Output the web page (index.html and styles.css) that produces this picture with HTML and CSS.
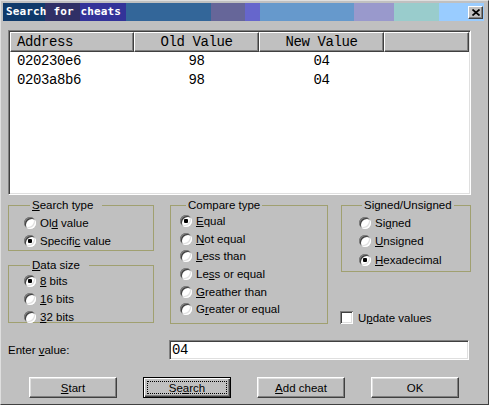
FILE: index.html
```html
<!DOCTYPE html>
<html>
<head>
<meta charset="utf-8">
<link rel="stylesheet" href="styles.css">
</head>
<body>
<div class="window">
  <div class="titlebar">
    <span class="title">Search for cheats</span>
    <span class="close"><svg width="8" height="7" viewBox="0 0 8 7"><path d="M0.5 0.5L7.5 6.5M7.5 0.5L0.5 6.5" stroke="#000" stroke-width="1.7" fill="none"/></svg></span>
  </div>
  <div class="content">
    <div class="list">
      <div class="list-head">
        <div class="hcell c-addr">Address</div>
        <div class="hcell c-val">Old Value</div>
        <div class="hcell c-val">New Value</div>
        <div class="hcell c-rest"></div>
      </div>
      <div class="row"><span class="c-addr">020230e6</span><span class="c-val">98</span><span class="c-val">04</span></div>
      <div class="row"><span class="c-addr">0203a8b6</span><span class="c-val">98</span><span class="c-val">04</span></div>
    </div>

    <div class="options">
      <div class="col col1">
        <fieldset class="group g-search">
          <legend class="wide"><u>S</u>earch type</legend>
          <div class="opt"><span class="radio"></span><span class="lbl">Ol<u>d</u> value</span></div>
          <div class="opt"><span class="radio on"></span><span class="lbl">Specifi<u>c</u> value</span></div>
        </fieldset>
        <fieldset class="group g-size">
          <legend class="wide"><u>D</u>ata size</legend>
          <div class="opt"><span class="radio on"></span><span class="lbl"><u>8</u> bits</span></div>
          <div class="opt"><span class="radio"></span><span class="lbl"><u>1</u>6 bits</span></div>
          <div class="opt"><span class="radio"></span><span class="lbl"><u>3</u>2 bits</span></div>
        </fieldset>
      </div>
      <div class="col col2">
        <fieldset class="group g-compare">
          <legend>Compare type</legend>
          <div class="opt"><span class="radio on"></span><span class="lbl"><u>E</u>qual</span></div>
          <div class="opt"><span class="radio"></span><span class="lbl"><u>N</u>ot equal</span></div>
          <div class="opt"><span class="radio"></span><span class="lbl"><u>L</u>ess than</span></div>
          <div class="opt"><span class="radio"></span><span class="lbl">Le<u>s</u>s or equal</span></div>
          <div class="opt"><span class="radio"></span><span class="lbl"><u>G</u>reather than</span></div>
          <div class="opt"><span class="radio"></span><span class="lbl">G<u>r</u>eater or equal</span></div>
        </fieldset>
      </div>
      <div class="col col3">
        <fieldset class="group g-signed">
          <legend class="tight">Signed/Unsigned</legend>
          <div class="opt"><span class="radio"></span><span class="lbl">Si<u>g</u>ned</span></div>
          <div class="opt"><span class="radio"></span><span class="lbl"><u>U</u>nsigned</span></div>
          <div class="opt"><span class="radio on"></span><span class="lbl"><u>H</u>exadecimal</span></div>
        </fieldset>
        <div class="check-row"><span class="checkbox"></span><span class="lbl">U<u>p</u>date values</span></div>
      </div>
    </div>

    <div class="value-row">
      <span class="value-label">Enter <u>v</u>alue:</span>
      <div class="edit">04</div>
    </div>

    <div class="buttons">
      <div class="btn"><span class="lbl"><u>S</u>tart</span></div>
      <div class="btn default"><span class="focus"><span class="lbl">Se<u>a</u>rch</span></span></div>
      <div class="btn"><span class="lbl"><u>A</u>dd cheat</span></div>
      <div class="btn"><span class="lbl">OK</span></div>
    </div>
  </div>
</div>
</body>
</html>
```

FILE: styles.css
```css
* { box-sizing: border-box; }

body {
  margin: 0;
  width: 489px;
  height: 405px;
  overflow: hidden;
  background: #c0c0c0;
  font-family: "Liberation Sans", Arial, sans-serif;
  font-size: 11.5px;
  color: #000;
}

u { text-decoration: underline; text-underline-offset: 1px; }

.window {
  width: 489px;
  height: 405px;
  border-top: 1px solid #dfdfdf;
  border-left: 1px solid #dfdfdf;
  border-right: 1px solid #404040;
  border-bottom: 1px solid #404040;
  padding: 2px 4px 0 2px;
  background: #c0c0c0;
}

.titlebar {
  height: 18px;
  display: flex;
  align-items: center;
  justify-content: space-between;
  padding: 0 1px 0 3px;
  background: linear-gradient(to right,
    #0f3a6b 0 42px,
    #303066 42px 77px,
    #333399 77px 123px,
    #336699 123px 208px,
    #666699 208px 242px,
    #6666cc 242px 257px,
    #6699cc 257px 351px,
    #9999cc 351px 391px,
    #99cccc 391px 436px,
    #99ccff 436px);
}

.title {
  font-family: "DejaVu Sans Mono", "Liberation Mono", monospace;
  font-weight: bold;
  font-size: 11px;
  letter-spacing: 0.15px;
  color: #fff;
  line-height: 18px;
}

.close {
  width: 15px;
  height: 13px;
  background: #c0c0c0;
  border-top: 1px solid #fff;
  border-left: 1px solid #fff;
  border-right: 1px solid #404040;
  border-bottom: 1px solid #404040;
  box-shadow: inset -1px -1px 0 #808080;
  display: flex;
  align-items: center;
  justify-content: center;
}

.content {
  padding: 9px 0 0 5px;
}

/* list view */
.list {
  width: 463px;
  height: 165px;
  background: #fff;
  border-top: 1px solid #808080;
  border-left: 1px solid #808080;
  border-right: 1px solid #fff;
  border-bottom: 1px solid #fff;
  box-shadow: inset 1px 1px 0 #404040, inset -1px -1px 0 #dfdfdf;
  padding: 1px;
  font-family: "Liberation Mono", "DejaVu Sans Mono", monospace;
  font-size: 14px;
  letter-spacing: -0.4px;
}

.list-head {
  display: flex;
  height: 20px;
}

.hcell {
  height: 20px;
  line-height: 18px;
  background: #c0c0c0;
  border-top: 1px solid #fff;
  border-left: 1px solid #fff;
  border-right: 1px solid #404040;
  border-bottom: 1px solid #404040;
  box-shadow: inset -1px -1px 0 #808080;
}

.c-addr { width: 124px; padding-left: 6px; }
.c-val { width: 125px; text-align: center; }
.c-rest { width: 85px; }

.row {
  display: flex;
  height: 19px;
  line-height: 19px;
}

.row .c-addr { padding-left: 7px; }

/* option groups */
.options {
  display: flex;
  margin-top: 4px;
  height: 131px;
}

.col { display: flex; flex-direction: column; }
.col1 { width: 146px; margin-right: 16px; }
.col2 { width: 158px; margin-right: 13px; }
.col3 { width: 130px; }

.group {
  margin: 0;
  min-width: 0;
  border: 1px solid #a0a070;
  padding: 2px 0 2px 15px;
}

.group legend {
  padding: 0 2px;
  margin-left: 6px;
  line-height: 13px;
}

.group legend.wide { padding-right: 9px; }
.group legend.tight { margin-left: 3px; }

.opt {
  display: flex;
  align-items: center;
  height: 18px;
}

.g-search { height: 52px; }
.g-size { height: 64px; margin-top: 8px; padding-top: 0; }
.g-compare { height: 125px; padding: 0 0 0 9px; }
.g-compare .opt { height: 17.7px; }
.g-signed { height: 73px; padding-left: 17px; }
.g-signed .opt { height: 18.3px; }

.radio {
  position: relative;
  width: 12px;
  height: 12px;
  border-radius: 50%;
  background: #fff;
  box-shadow: inset 1px 1px 0 #808080, inset -1px -1px 0 #fff,
              inset 2px 2px 0 #404040, inset -2px -2px 0 #dfdfdf;
  margin-right: 4px;
  flex: none;
}

.radio.on::after {
  content: "";
  position: absolute;
  left: 4px;
  top: 4px;
  width: 4px;
  height: 4px;
  border-radius: 1px;
  background: #000;
}

.check-row {
  display: flex;
  align-items: center;
  margin-top: 39px;
  margin-left: -1px;
  height: 13px;
}

.checkbox {
  width: 13px;
  height: 13px;
  background: #fff;
  box-shadow: inset 1px 1px 0 #808080, inset -1px -1px 0 #fff,
              inset 2px 2px 0 #404040, inset -2px -2px 0 #dfdfdf;
  margin-right: 5px;
  flex: none;
}

/* value */
.value-row {
  display: flex;
  align-items: center;
  margin-top: 10px;
  height: 20px;
}

.value-label { width: 161px; }

.edit {
  width: 300px;
  height: 20px;
  background: #fff;
  border-top: 1px solid #808080;
  border-left: 1px solid #808080;
  border-right: 1px solid #fff;
  border-bottom: 1px solid #fff;
  box-shadow: inset 1px 1px 0 #404040, inset -1px -1px 0 #dfdfdf;
  padding-left: 2px;
  line-height: 18px;
  font-family: "Liberation Mono", "DejaVu Sans Mono", monospace;
  font-size: 14px;
  letter-spacing: -0.4px;
}

/* buttons */
.buttons {
  display: flex;
  gap: 26px;
  margin-top: 17px;
  padding-left: 21px;
}

.btn {
  width: 88px;
  height: 21px;
  display: flex;
  align-items: center;
  justify-content: center;
  background: #c0c0c0;
  border-top: 1px solid #fff;
  border-left: 1px solid #fff;
  border-right: 1px solid #404040;
  border-bottom: 1px solid #404040;
  box-shadow: inset -1px -1px 0 #808080, inset 1px 1px 0 #dfdfdf;
}

.btn.default {
  border: 1px solid #000;
  box-shadow: inset 1px 1px 0 #fff, inset -1px -1px 0 #404040, inset -2px -2px 0 #808080;
  padding: 3px;
}

.btn .focus {
  flex: 1;
  align-self: stretch;
  display: flex;
  align-items: center;
  justify-content: center;
  border: 1px dotted #000;
}
```
